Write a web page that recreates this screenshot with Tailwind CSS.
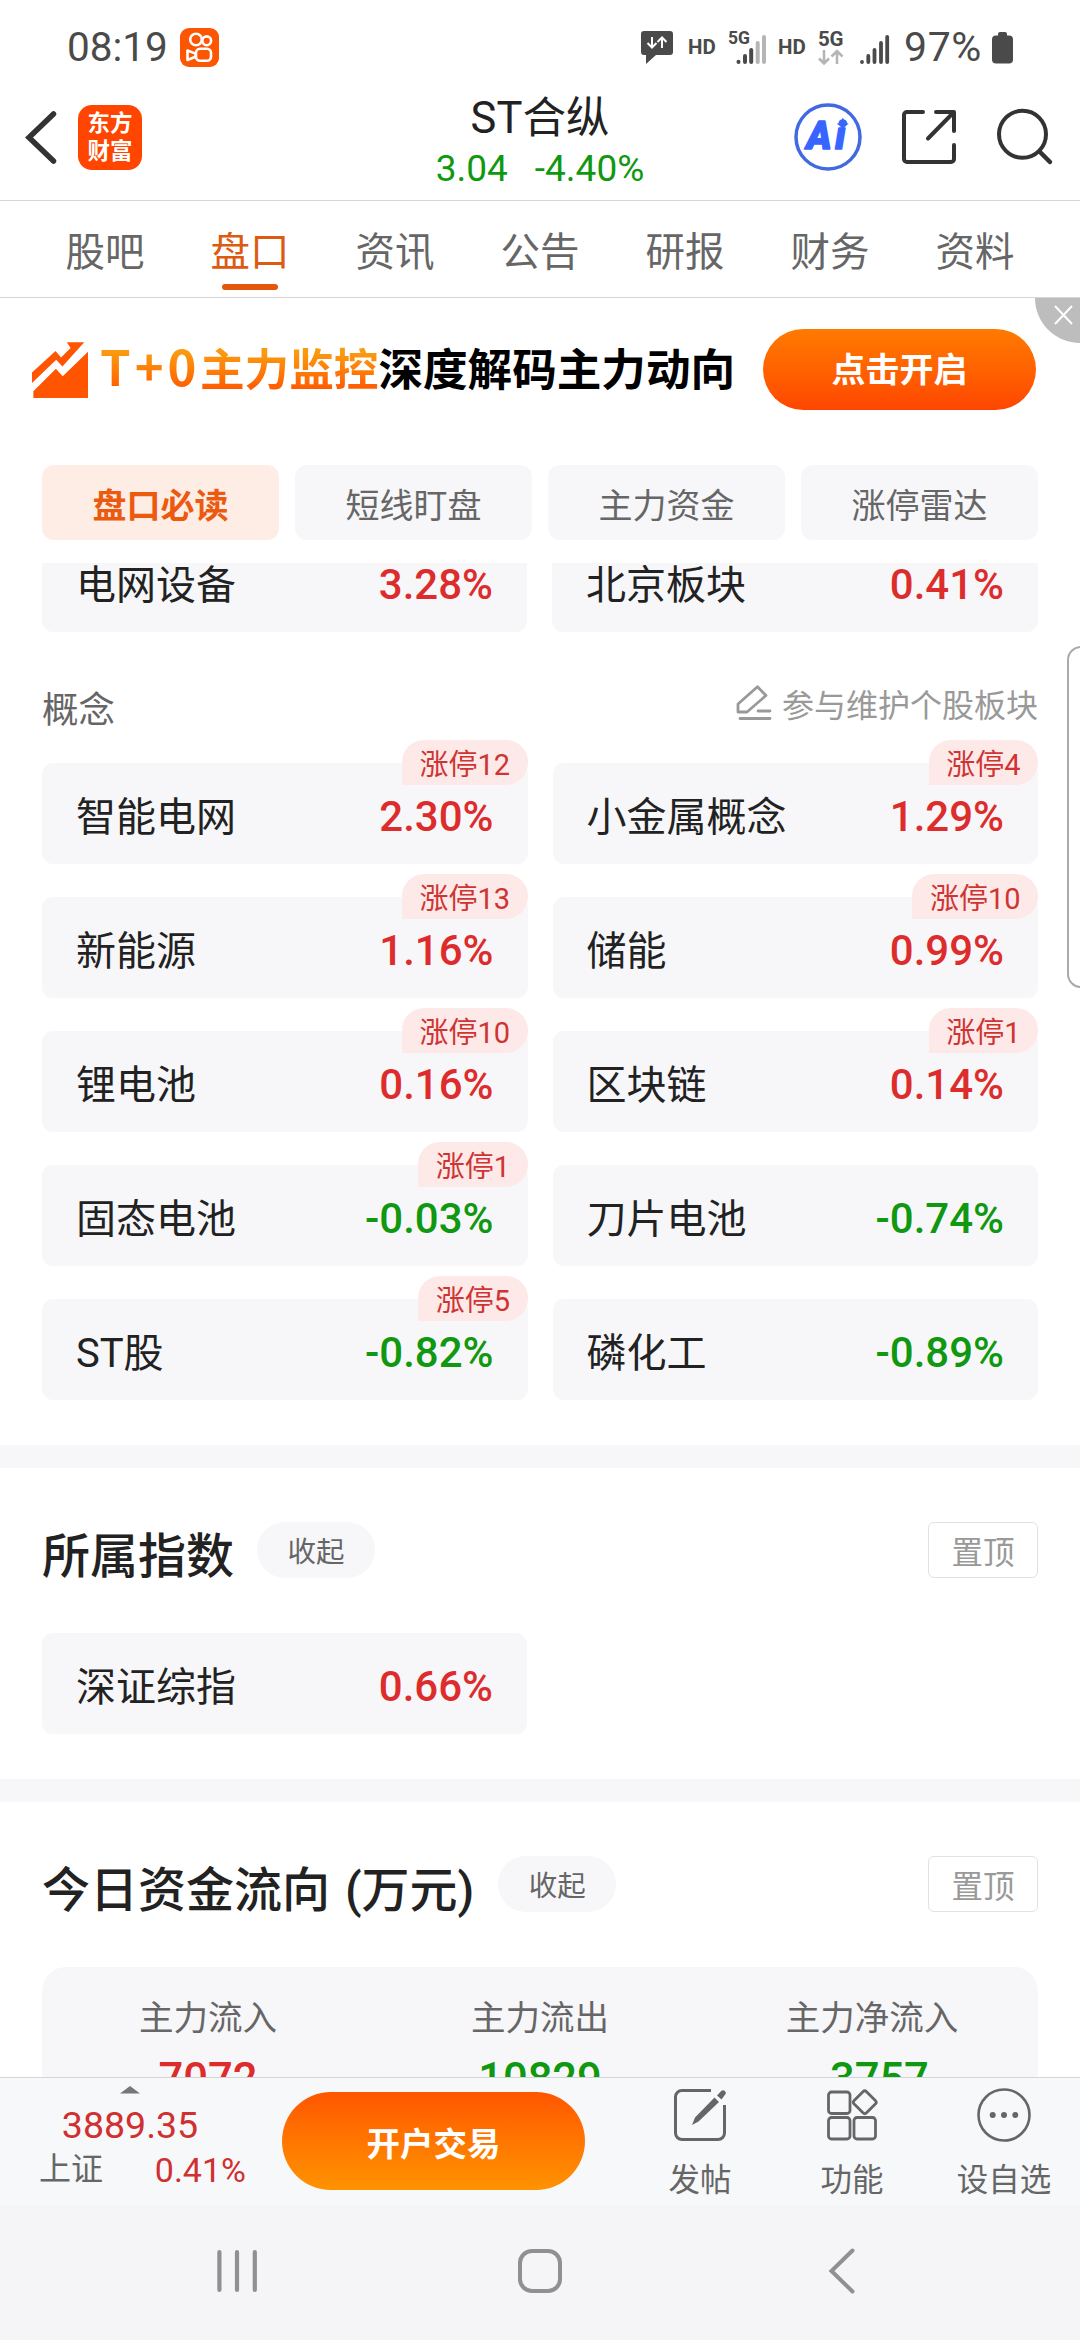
<!DOCTYPE html>
<html lang="zh-CN">
<head>
    <meta charset="UTF-8">
    <meta name="viewport" content="width=device-width, initial-scale=1.0">
    <title>ST合纵</title>
    <script src="https://cdn.jsdelivr.net/npm/@tailwindcss/browser@4"></script>
    <style>
        body { font-family: Roboto, 'Noto Sans CJK SC', sans-serif; }
    </style>
</head>
<body class="bg-white text-[#222]">
    <div class="relative w-[1080px] h-[2340px] flex flex-col overflow-hidden leading-none">
        <!-- Status bar -->
        <div class="h-[90px] shrink-0 flex items-center justify-between pl-[67px] pr-[67px] pt-[5px] text-[#4a4a4a]">
            <div class="flex items-center">
                <span class="w-[113px] text-[40.500px]">08:19</span>
                <svg class="w-[39px] h-[39px]" viewBox="0 0 39 39" fill="none" stroke="#fff" stroke-width="2.6">
                    <rect width="39" height="39" rx="9" fill="#fc5603" stroke="none"/>
                    <circle cx="16" cy="11.5" r="5.8"/>
                    <circle cx="26.7" cy="12.8" r="4.4"/>
                    <rect x="16" y="20.8" width="15" height="12" rx="4"/>
                    <path d="M7.5 22.5v9.5l8-3.2v-3.2z" stroke-linejoin="round"/>
                </svg>
            </div>
            <div class="flex items-center">
                <svg class="w-8 h-[34px] mr-[15px]" viewBox="0 0 32 34" fill="none">
                    <path d="M3 0h26a3 3 0 0 1 3 3v18a3 3 0 0 1-3 3H15L5 33V24H3a3 3 0 0 1-3-3V3a3 3 0 0 1 3-3z" fill="#4a4a4a"/>
                    <path d="M11 6v10M6.500 12l4.500 4.500 4.500-4.500M21 17V7M16.500 11l4.500-4.500 4.500 4.500" stroke="#fff" stroke-width="2"/>
                </svg>
                <span class="w-[40px] text-[20.500px] font-bold">HD</span>
                <svg class="w-[38px] h-[34px] mr-[12px] overflow-visible" viewBox="0 0 38 34">
                    <text x="0" y="13" font-size="17.500" font-weight="700" fill="#4a4a4a" textLength="22">5G</text>
                    <g stroke="#4a4a4a" stroke-width="4" stroke-linecap="round">
                        <path d="M10.500 31v-.2M17 31v-6M23.200 31V19"/>
                        <path d="M29.700 31V12M36 31V6" stroke="#b5b5b5"/>
                    </g>
                </svg>
                <span class="w-[40px] text-[20.500px] font-bold">HD</span>
                <svg class="w-[26px] h-[34px] mr-[16px] overflow-visible" viewBox="0 0 26 34" fill="none">
                    <text x="0" y="15" font-size="20.500" font-weight="700" fill="#4a4a4a" textLength="25.500">5G</text>
                    <path d="M6 19v13M1 27.500l5 5 5-5M19 33V20M13.500 25.500l5.500-5.500 5.500 5.500" stroke="#b5b5b5" stroke-width="2.600"/>
                </svg>
                <svg class="w-[30px] h-[34px] mr-[14px]" viewBox="0 0 30 34" stroke="#4a4a4a" stroke-width="3.800" stroke-linecap="round">
                    <path d="M2 31v-.2M8.300 31v-6M14.500 31V19M21 31V12M27.200 31V6"/>
                </svg>
                <span class="w-[88px] text-[41px] tracking-[0.6px]">97%</span>
                <svg class="w-[21px] h-[32px]" viewBox="0 0 21 32" fill="#4a4a4a">
                    <rect x="6" y="0" width="9" height="7" rx="2"/>
                    <rect x="0" y="3.500" width="21" height="28" rx="4"/>
                </svg>
            </div>
        </div>

        <!-- Header -->
        <header class="h-[111px] shrink-0 grid grid-cols-3 border-b border-[#d6d6d6]">
            <div class="flex items-start pt-[15px] pl-[24px]">
                <svg class="w-[34px] h-[65px] mr-[20px]" viewBox="0 0 34 65" fill="none" stroke="#333" stroke-width="5.500">
                    <path d="M29.500 9L5 32.500 29.500 56" stroke-linecap="round"/>
                </svg>
                <div class="w-[64px] h-[65px] rounded-[14px] bg-[#ff4500] text-white text-[22.500px] font-bold leading-[28px] text-center pt-[4px]">东方<br>财富</div>
            </div>
            <div class="flex flex-col items-center">
                <div class="text-[43.500px] leading-[50px] pt-[4px] whitespace-nowrap">ST合纵</div>
                <div class="flex gap-[27px] text-[37px] leading-[42px] pt-[4px] text-[#109810] whitespace-nowrap"><span>3.04</span><span>-4.40%</span></div>
            </div>
            <div class="flex items-start justify-end pt-[13px] pr-[26px]">
                <svg class="w-[68px] h-[68px] mr-[38px]" viewBox="0 0 68 68" fill="none">
                    <circle cx="34" cy="34" r="32" stroke="#4169e1" stroke-width="3.500"/>
                    <text x="12.500" y="46" font-size="38" font-weight="900" font-style="italic" fill="#3865ff" stroke="#3865ff" stroke-width="1.500" stroke-linejoin="round" textLength="39">Ai</text>
                    <path d="M48.800 14.500q1.500 5 6 6.500-4.500 1.500-6 6.500-1.500-5-6-6.500 4.500-1.500 6-6.500z" fill="#3865ff"/>
                </svg>
                <svg class="w-[58px] h-[68px] mr-[38px]" viewBox="0 0 58 68" fill="none" stroke="#333" stroke-width="4" stroke-linecap="round">
                    <path d="M23 9H7a3 3 0 0 0-3 3v44a3 3 0 0 0 3 3h44a3 3 0 0 0 3-3V42M36 9h18v19M53.500 9.500L28 35.500" stroke-linejoin="round"/>
                </svg>
                <svg class="w-[58px] h-[68px]" viewBox="0 0 58 68" fill="none" stroke="#333" stroke-width="4" stroke-linecap="round">
                    <circle cx="26.500" cy="31.300" r="23.500"/>
                    <path d="M43.500 48.500L54 59" stroke-width="4.500"/>
                </svg>
            </div>
        </header>

        <!-- Tabs -->
        <nav class="h-[97px] shrink-0 grid grid-cols-7 px-[32.500px] text-[39.500px] text-[#666] text-center border-b border-[#d6d6d6]">
            <a class="pt-[32px]">股吧</a>
            <a class="pt-[32px] flex flex-col items-center text-[#dd5a12]">盘口<span class="mt-[11px] w-14 h-[6px] rounded-full bg-[#e6560a]"></span></a>
            <a class="pt-[32px]">资讯</a>
            <a class="pt-[32px]">公告</a>
            <a class="pt-[32px]">研报</a>
            <a class="pt-[32px]">财务</a>
            <a class="pt-[32px]">资料</a>
        </nav>

        <!-- Promo banner -->
        <div class="relative h-[167px] shrink-0 flex items-start pl-[32px]">
            <svg class="w-[56px] h-[56px] mt-[44px]" viewBox="92 156 164 167" preserveAspectRatio="none" fill="#ff5500">
                <path d="M92 247L161 183 177 202 205 174 194 157H245L181 229 163 209 92 278z"/>
                <path d="M96 303L162 236 182 258 256 185V323H96z"/>
            </svg>
            <div class="flex items-baseline mt-[41px] ml-[12px] leading-[52px] font-bold font-['Noto_Sans_CJK_SC'] whitespace-nowrap">
                <span class="bg-linear-to-b from-[#fa9a10] from-20% to-[#ff4d00] to-85% bg-clip-text text-transparent"><span class="inline-block w-[100px] text-[49px] tracking-[4px]">T+0</span><span class="text-[44.600px]">主力监控</span></span>
                <span class="text-[44.600px] text-black">深度解码主力动向</span>
            </div>
            <div class="absolute left-[763px] top-[31px] w-[273px] h-[81px] rounded-full bg-linear-to-b from-[#ff7a00] to-[#ff4500] text-white text-[34px] font-bold flex items-center justify-center">点击开启</div>
            <div class="absolute right-0 top-0 w-[45px] h-[45px] rounded-bl-[45px] bg-[#bdbdbd]">
                <svg class="ml-[19px] mt-[7px] w-[19px] h-[20px]" viewBox="0 0 19 20" stroke="#fff" stroke-width="2"><path d="M1 1l17 18M18 1L1 19"/></svg>
            </div>
        </div>

        <!-- Chips -->
        <div class="h-[98px] shrink-0 px-[42px] grid grid-cols-4 gap-4 content-start text-[34px] text-[#666] text-center leading-[75px]">
            <div class="h-[75px] rounded-xl bg-[#feede5] text-[#eb5a0f] font-bold pt-[4px]">盘口必读</div>
            <div class="h-[75px] rounded-xl bg-[#f7f7fa] pt-[4px]">短线盯盘</div>
            <div class="h-[75px] rounded-xl bg-[#f7f7fa] pt-[4px]">主力资金</div>
            <div class="h-[75px] rounded-xl bg-[#f7f7fa] pt-[4px]">涨停雷达</div>
        </div>

        <!-- Scrolling content -->
        <main class="flex-1 min-h-0 overflow-hidden flex flex-col">
            <!-- Last row of the previous group, cut by the chips bar -->
            <div class="h-[69px] shrink-0 overflow-hidden px-[42px] flex items-end gap-[25px]">
                <div class="w-[485px] h-[101px] shrink-0 rounded-[11px] bg-[#f7f7fa] px-[34px] flex items-center justify-between">
                    <span class="text-[40px] pt-[8px]">电网设备</span><span class="text-[42px] font-medium text-[#dd2c2c] pt-[6px]">3.28%</span>
                </div>
                <div class="w-[486px] h-[101px] shrink-0 rounded-[11px] bg-[#f7f7fa] px-[34px] flex items-center justify-between">
                    <span class="text-[40px] pt-[8px]">北京板块</span><span class="text-[42px] font-medium text-[#dd2c2c] pt-[6px]">0.41%</span>
                </div>
            </div>

            <div class="h-[131px] shrink-0 px-[42px] flex items-start justify-between">
                <span class="text-[36.500px] text-[#666] pt-[61px]">概念</span>
                <div class="flex items-start pt-[53px] text-[#999]">
                    <svg class="w-[36px] h-[36px] mr-[10px]" viewBox="0 0 36 36" fill="none" stroke="#999" stroke-width="2.800" stroke-linecap="round" stroke-linejoin="round">
                        <path d="M2 27v-8L21.500 1.800l8.500 8.700L11 27zM22 26h12M4 33.500h30"/>
                    </svg>
                    <span class="text-[32px] pt-[5px]">参与维护个股板块</span>
                </div>
            </div>

            <div id="concepts" class="shrink-0 px-[42px] grid grid-cols-2 gap-x-[25px] gap-y-[33px] pb-[45px]"></div>

            <div class="h-[23px] shrink-0 bg-[#f7f7fa]"></div>

            <!-- Index membership -->
            <section class="h-[311px] shrink-0 px-[42px] pt-[54px]">
                <div class="flex items-start">
                    <h2 class="text-[48px] font-medium pt-[11px]">所属指数</h2>
                    <span class="ml-[23px] w-[118px] h-[56px] rounded-full bg-[#f7f7fa] text-[28.500px] text-[#666] text-center leading-[62px]">收起</span>
                    <span class="ml-auto w-[110px] h-[56px] rounded-md border border-[#e2e2e2] text-[31.500px] text-[#999] text-center leading-[62px]">置顶</span>
                </div>
                <div class="mt-[52px] w-[485px] h-[101px] rounded-[11px] bg-[#f7f7fa] px-[34px] flex items-center justify-between">
                    <span class="text-[40px] pt-[8px]">深证综指</span><span class="text-[42px] font-medium text-[#dd2c2c] pt-[6px]">0.66%</span>
                </div>
            </section>

            <div class="h-[23px] shrink-0 bg-[#f7f7fa]"></div>

            <!-- Capital flow -->
            <section class="h-[400px] shrink-0 px-[42px] pt-[54px]">
                <div class="flex items-start">
                    <h2 class="text-[48px] font-medium pt-[11px] [word-spacing:3px]">今日资金流向 (万元)</h2>
                    <span class="ml-[24px] w-[118px] h-[56px] rounded-full bg-[#f7f7fa] text-[28.500px] text-[#666] text-center leading-[62px]">收起</span>
                    <span class="ml-auto w-[110px] h-[56px] rounded-md border border-[#e2e2e2] text-[31.500px] text-[#999] text-center leading-[62px]">置顶</span>
                </div>
                <div class="mt-[52px] h-[240px] rounded-[24px] bg-[#f7f7fa] grid grid-cols-3 text-center">
                    <div class="pt-[34px]"><div class="text-[34.500px] text-[#666]">主力流入</div><div class="mt-[22px] text-[43.500px] font-medium text-[#dd2c2c]">7072</div></div>
                    <div class="pt-[34px]"><div class="text-[34.500px] text-[#666]">主力流出</div><div class="mt-[22px] text-[43.500px] font-medium text-[#109810]">10829</div></div>
                    <div class="pt-[34px]"><div class="text-[34.500px] text-[#666]">主力净流入</div><div class="mt-[22px] text-[43.500px] font-medium text-[#109810]">-3757</div></div>
                </div>
            </section>
        </main>

        <!-- Trade bar -->
        <footer class="h-[129px] shrink-0 border-t border-[#d2d4d8] bg-[#f7f8fa] flex items-start">
            <div class="w-[282px] pl-[39px] pr-[36px] flex flex-col">
                <svg class="w-[20px] h-[8px] mt-[8px] ml-[81px]" viewBox="0 0 20 8" fill="#777"><path d="M10 0l10 7.500H0z"/></svg>
                <div class="mt-[13px] w-[182px] text-center text-[37.500px] text-[#d03030]">3889.35</div>
                <div class="mt-[8px] flex justify-between">
                    <span class="text-[32px] text-[#666]">上证</span><span class="text-[34px] text-[#d03030]">0.41%</span>
                </div>
            </div>
            <div class="mt-[14px] w-[303px] h-[98px] rounded-full bg-linear-to-b from-[#ff5500] to-[#ff9200] text-white text-[33.500px] font-bold text-center leading-[105px]">开户交易</div>
            <div class="ml-[39px] grid grid-cols-3 w-[456px] text-[31.500px] text-[#666] text-center">
                <div class="flex flex-col items-center pt-[10px]">
                    <svg class="w-[54px] h-[54px] mb-[23px]" viewBox="0 0 54 54" fill="none" stroke="#666" stroke-width="3">
                        <path d="M38 2.500H9A6.500 6.500 0 0 0 2.500 9v36A6.500 6.500 0 0 0 9 51.500h36A6.500 6.500 0 0 0 51.500 45V17"/>
                        <path d="M41.500 9.500l4.500 4.500L25.500 33.500 19 37l3-7.500zM44 7.500L48 3.200a2 2 0 0 1 4 3.500L48.500 11.500z" fill="#666" stroke="none"/>
                    </svg>
                    发帖
                </div>
                <div class="flex flex-col items-center pt-[10px]">
                    <svg class="w-[54px] h-[54px] mb-[23px]" viewBox="0 0 54 54" fill="none" stroke="#666" stroke-width="2.800">
                        <rect x="3.500" y="4" width="21.500" height="21.500" rx="3"/>
                        <rect x="3.500" y="29.500" width="21.500" height="21.500" rx="3"/>
                        <rect x="29" y="29.500" width="21.500" height="21.500" rx="3"/>
                        <rect x="31" y="5.500" width="17.500" height="17.500" rx="2.500" transform="rotate(45 39.750 14.250)"/>
                    </svg>
                    功能
                </div>
                <div class="flex flex-col items-center pt-[10px]">
                    <svg class="w-[54px] h-[54px] mb-[23px]" viewBox="0 0 54 54" fill="#666">
                        <circle cx="27" cy="27" r="25.500" fill="none" stroke="#666" stroke-width="2.600"/>
                        <circle cx="15.700" cy="27" r="3"/><circle cx="27" cy="27" r="3"/><circle cx="38.300" cy="27" r="3"/>
                    </svg>
                    设自选
                </div>
            </div>
        </footer>

        <!-- System navigation -->
        <div class="h-[134px] shrink-0 bg-[#f5f5f7] flex items-start justify-between pt-[42px] pl-[215px] pr-[215px]">
            <svg class="w-[44px] h-[46px]" viewBox="0 0 44 46" stroke="#909090" stroke-width="4.200" stroke-linecap="round"><path d="M4.400 4v38M22 4v38M39.800 4v38"/></svg>
            <svg class="w-[46px] h-[46px] -ml-px" viewBox="0 0 46 46" fill="none" stroke="#909090" stroke-width="4"><rect x="3" y="3" width="40" height="40" rx="12"/></svg>
            <svg class="w-[44px] h-[46px]" viewBox="0 0 44 46" fill="none" stroke="#909090" stroke-width="4" stroke-linecap="round"><path d="M31.500 2.500L10.500 23l21 20.500"/></svg>
        </div>

        <!-- Side drawer handle -->
        <div class="absolute left-[1067px] top-[646px] w-[30px] h-[342px] rounded-[14px] border-2 border-[#aaa] bg-white"></div>
    </div>

    <script>
        const concepts = [
            ['智能电网', '2.30%', 12], ['小金属概念', '1.29%', 4],
            ['新能源', '1.16%', 13], ['储能', '0.99%', 10],
            ['锂电池', '0.16%', 10], ['区块链', '0.14%', 1],
            ['固态电池', '-0.03%', 1], ['刀片电池', '-0.74%', 0],
            ['ST股', '-0.82%', 5], ['磷化工', '-0.89%', 0],
        ];

        document.getElementById('concepts').innerHTML = concepts.map(([name, change, limitUp]) => `
            <div class="relative h-[101px] rounded-[11px] bg-[#f7f7fa] px-[34px] flex items-center justify-between">
                <span class="text-[40px] pt-[8px]">${name}</span>
                <span class="text-[42px] font-medium pt-[6px] ${change.startsWith('-') ? 'text-[#109810]' : 'text-[#dd2c2c]'}">${change}</span>
                ${limitUp ? `<span class="absolute right-0 -top-[23px] h-[45px] px-[17.500px] rounded-[22px] rounded-bl-none bg-[#fde9e7] text-[29px] leading-[51px] text-[#cf3434]">涨停${limitUp}</span>` : ''}
            </div>`).join('');
    </script>
</body>
</html>
